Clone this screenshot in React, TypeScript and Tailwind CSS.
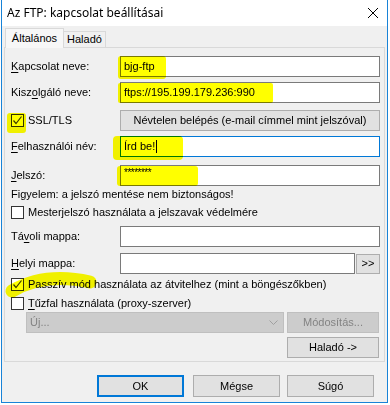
import React from "react";

const F = { fontFamily: '"Liberation Sans", Arial, sans-serif' } as const;

function U({ pre, u, post }: { pre?: string; u: string; post?: string }) {
  return (
    <span>
      {pre}
      <span className="underline underline-offset-[2px]">{u}</span>
      {post}
    </span>
  );
}

function Check({ checked }: { checked?: boolean }) {
  return (
    <div className="w-[13px] h-[13px] border border-[#333333] bg-white flex items-center justify-center shrink-0">
      {checked && (
        <svg width="11" height="11" viewBox="0 0 11 11">
          <path d="M1.5 5.5 L4 8.5 L9.5 1.5" fill="none" stroke="#3a3a3a" strokeWidth="1.2" />
        </svg>
      )}
    </div>
  );
}

function Input({ children, focused, className = "" }: { children?: React.ReactNode; focused?: boolean; className?: string }) {
  return (
    <div
      className={`h-[21px] bg-white border ${focused ? "border-[#0078d7]" : "border-[#7a7a7a]"} flex items-center pl-[3px] text-[11px] text-black ${className}`}
    >
      {children}
    </div>
  );
}

function Btn({ children, className = "" }: { children: React.ReactNode; className?: string }) {
  return (
    <div className={`bg-[#e1e1e1] border border-[#adadad] flex items-center justify-center text-[11px] text-black ${className}`}>
      {children}
    </div>
  );
}

function Row({ label, children, className = "" }: { label: React.ReactNode; children: React.ReactNode; className?: string }) {
  return (
    <div className={`flex items-center ${className}`}>
      <div className="w-[109px] text-[11px] text-black">{label}</div>
      <div className="flex-1">{children}</div>
    </div>
  );
}

export default function App() {
  return (
    <div className="relative w-[390px] h-[405px] bg-white overflow-hidden" style={F}>
      <div className="ml-[1px] w-[387px] h-[403px] border border-[#1883d7] border-t-0 bg-[#f0f0f0] flex flex-col">
        {/* title bar */}
        <div className="h-[26px] bg-white flex items-center justify-between pl-[5px] pr-[6px]">
          <span className="text-[12px] text-black" style={{ fontFamily: '"Noto Sans", "Open Sans", sans-serif' }}>
            Az FTP: kapcsolat beállításai
          </span>
          <svg width="12" height="12" viewBox="0 0 12 12" className="mr-[2px]">
            <path d="M1 1 L11 11 M11 1 L1 11" stroke="#000" strokeWidth="1" />
          </svg>
        </div>

        {/* tabs */}
        <div className="pt-[2px] px-[2px] flex items-end h-[22px] relative z-10">
          <div className="w-[59px] h-[20px] bg-[#f7f7f7] border border-[#d9d9d9] border-b-0 flex items-center justify-center text-[11px] text-black ml-[1px]">
            Általános
          </div>
          <div className="w-[42px] h-[16px] mb-[1px] bg-[#f0f0f0] border border-[#d9d9d9] border-l-0 border-b-0 flex items-center justify-center text-[11px] text-black">
            Haladó
          </div>
        </div>

        {/* panel */}
        <div className="mx-[2px] -mt-[1px] h-[315px] border border-[#d9d9d9] bg-[#f0f0f0] pl-[6px] pr-[4px] flex flex-col">
          <Row label={<U u="K" post="apcsolat neve:" />} className="mt-[8px]">
            <Input>bjg-ftp</Input>
          </Row>
          <Row label={<U pre="Kisz" u="o" post="lgáló neve:" />} className="mt-[5px]">
            <Input>ftps://195.199.179.236:990</Input>
          </Row>
          <div className="flex items-center mt-[7px]">
            <div className="w-[109px] flex items-center gap-[4px]">
              <Check checked />
              <span className="text-[11px] text-black">SSL/TLS</span>
            </div>
            <Btn className="flex-1 h-[21px]">Névtelen belépés (e-mail címmel mint jelszóval)</Btn>
          </div>
          <Row label={<U u="F" post="elhasználói név:" />} className="mt-[5px]">
            <Input focused>
              Írd be!
              <span className="inline-block w-[1px] h-[13px] bg-black ml-[1px]" />
            </Input>
          </Row>
          <Row label={<U u="J" post="elszó:" />} className="mt-[8px]">
            <Input>
              <span className="text-[10px] -mt-[6px] tracking-[-0.5px]">********</span>
            </Input>
          </Row>
          <div className="h-[17px] flex items-center text-[11px] text-black">
            Figyelem: a jelszó mentése nem biztonságos!
          </div>
          <div className="h-[18px] flex items-center gap-[4px] text-[11px] text-black">
            <Check />
            <span>Mesterjelszó használata a jelszavak védelmére</span>
          </div>
          <Row label={<U pre="Tá" u="v" post="oli mappa:" />} className="mt-[5px]">
            <Input />
          </Row>
          <Row label={<U u="H" post="elyi mappa:" />} className="mt-[6px]">
            <div className="flex items-center gap-[1px]">
              <Input className="flex-1" />
              <Btn className="w-[24px] h-[20px]">&gt;&gt;</Btn>
            </div>
          </Row>
          <div className="h-[20px] flex items-center gap-[4px] text-[11px] text-black">
            <Check checked />
            <span>Passzív mód használata az átvitelhez (mint a böngészőkben)</span>
          </div>
          <div className="h-[18px] flex items-center gap-[4px] text-[11px] text-black">
            <Check />
            <span>
              <U u="T" post="űzfal használata (proxy-szerver)" />
            </span>
          </div>
          <div className="flex items-center h-[21px]">
            <div className="ml-[15px] w-[258px] h-[21px] bg-[#cccccc] border border-[#bfbfbf] flex items-center justify-between pl-[3px] pr-[5px] text-[11px] text-[#838383]">
              <span>Új...</span>
              <svg width="9" height="6" viewBox="0 0 9 6">
                <path d="M0.5 0.5 L4.5 4.5 L8.5 0.5" fill="none" stroke="#a0a0a0" strokeWidth="1" />
              </svg>
            </div>
            <div className="ml-[3px] w-[92px] h-[21px] bg-[#cccccc] border border-[#bfbfbf] flex items-center justify-center text-[11px] text-[#838383]">
              Módosítás...
            </div>
          </div>
          <div className="flex justify-end mt-[4px] pr-[1px]">
            <Btn className="w-[92px] h-[21px]">Haladó -&gt;</Btn>
          </div>
        </div>

        {/* footer */}
        <div className="flex items-center mt-[13px] pl-[95px]">
          <Btn className="w-[87px] h-[22px] !border-2 !border-[#0078d7]">OK</Btn>
          <Btn className="w-[87px] h-[22px] ml-[9px]">Mégse</Btn>
          <Btn className="w-[87px] h-[22px] ml-[7px]">Súgó</Btn>
        </div>
      </div>

      {/* highlighter marks */}
      <svg
        className="absolute left-0 top-0 pointer-events-none mix-blend-multiply"
        width="390"
        height="405"
        viewBox="0 0 390 405"
      >
        <g fill="#ffff00">
          <rect x="118" y="56" width="48" height="23" rx="3" />
          <rect x="118" y="83" width="155" height="20" rx="2" />
          <rect x="7" y="113" width="19" height="20" rx="3" />
          <rect x="113" y="136" width="70" height="24" rx="4" />
          <rect x="117" y="166" width="81" height="20" rx="3" />
        </g>
        <path d="M12 291 Q 45 272 90 282" fill="none" stroke="#ffff00" strokeWidth="13" strokeLinecap="round" />
      </svg>
    </div>
  );
}
